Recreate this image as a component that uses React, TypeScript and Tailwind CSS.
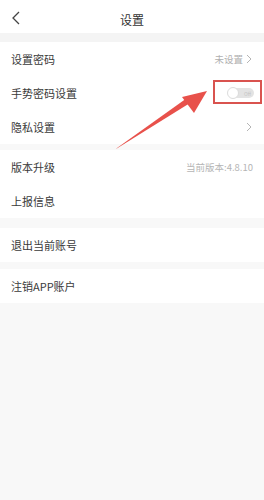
import React from "react";

const font = { fontFamily: '"Noto Sans CJK SC", "Noto Sans", sans-serif' };

function Chevron() {
  return (
    <svg width="6" height="10" viewBox="0 0 6 10" className="ml-[3px]">
      <path d="M1 1 L5 5 L1 9" fill="none" stroke="#b5b5b5" strokeWidth="1" />
    </svg>
  );
}

function Row({ label, right }: { label: string; right?: React.ReactNode }) {
  return (
    <div className="h-[34px] flex items-center justify-between pl-[11px] pr-[12px]">
      <span className="text-[11px] text-[#3a3a3a]">{label}</span>
      {right}
    </div>
  );
}

export default function App() {
  return (
    <div className="relative w-[264px] h-[500px] bg-[#f8f8f8] overflow-hidden" style={font}>
      <div className="h-[33px] bg-white flex items-center justify-center relative">
        <svg width="10" height="14" viewBox="0 0 10 14" className="absolute left-[11px] top-[11px]">
          <path d="M8 1 L2 7 L8 13" fill="none" stroke="#444" strokeWidth="1.3" />
        </svg>
        <span className="text-[12px] text-[#333] mt-[6px]">设置</span>
      </div>
      <div className="h-[9px] bg-[#f4f4f4]" />
      <div className="bg-white">
        <Row
          label="设置密码"
          right={
            <span className="flex items-center text-[9.5px] text-[#b0b0b0]">
              未设置
              <Chevron />
            </span>
          }
        />
        <Row
          label="手势密码设置"
          right={
            <div className="w-[26px] h-[10px] rounded-full bg-[#e3e3e3] relative flex items-center justify-end pr-[3px] mr-[-2px]">
              <span className="text-[5px] text-[#c4c4c4] leading-none">Off</span>
              <div className="absolute left-[-1px] top-[-1px] w-[12px] h-[12px] rounded-full bg-white border border-[#dcdcdc]" />
            </div>
          }
        />
        <Row label="隐私设置" right={<Chevron />} />
      </div>
      <div className="h-[6px]" />
      <div className="bg-white">
        <Row
          label="版本升级"
          right={<span className="text-[9.5px] text-[#b5b5b5] mr-[-1px]">当前版本:4.8.10</span>}
        />
        <Row label="上报信息" />
      </div>
      <div className="h-[10px]" />
      <div className="bg-white">
        <Row label="退出当前账号" />
      </div>
      <div className="h-[7px]" />
      <div className="bg-white">
        <Row label="注销APP账户" />
      </div>

      <div className="absolute left-[213px] top-[80px] w-[49px] h-[24px] border-2 border-[#d9534f]" />
      <svg className="absolute left-0 top-0" width="264" height="500" viewBox="0 0 264 500">
        <polygon points="116,149 190,103 187,98 117,148" fill="#e8514b" />
        <polygon points="207,91 182,97 194,113" fill="#e8514b" />
      </svg>
    </div>
  );
}
